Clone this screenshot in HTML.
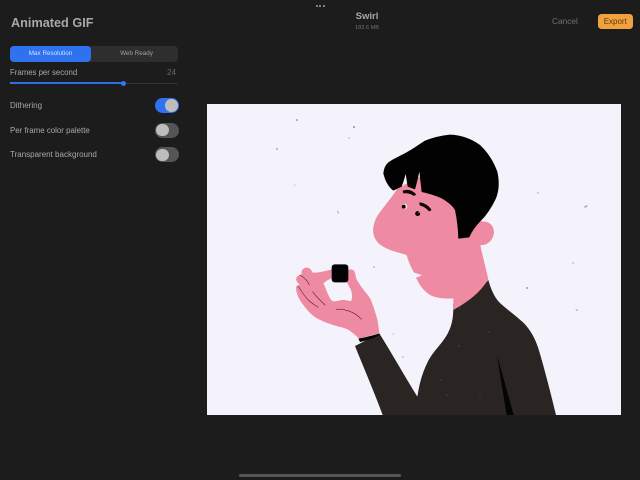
<!DOCTYPE html>
<html>
<head>
<meta charset="utf-8">
<style>
html,body{margin:0;padding:0;background:#1c1c1d;}
body{width:640px;height:480px;position:relative;overflow:hidden;font-family:"Liberation Sans",sans-serif;}
#w{position:absolute;left:0;top:0;width:640px;height:480px;filter:blur(.3px);}
.t{position:absolute;white-space:nowrap;line-height:1;}
.b{position:absolute;}
.tog{position:absolute;left:155px;width:24px;height:15px;border-radius:8px;background:#555556;}
.tog i{position:absolute;top:1.25px;width:12.5px;height:12.5px;border-radius:50%;background:#bdbdbd;}
svg{position:absolute;left:0;top:0;}
</style>
</head>
<body>
<div id="w">
<div class="t" style="left:11px;top:17px;font-size:12.7px;font-weight:bold;color:#a8a8a8;">Animated GIF</div>

<div class="b" style="left:10px;top:46px;width:168px;height:15.5px;border-radius:4px;background:#2e2e2f;"></div>
<div class="b" style="left:10px;top:46px;width:81px;height:15.5px;border-radius:4px;background:#2f72f0;"></div>
<div class="t" style="left:10px;width:81px;text-align:center;top:51px;font-size:6.3px;color:#d6e2fa;">Max Resolution</div>
<div class="t" style="left:93px;width:87px;text-align:center;top:51px;font-size:6.3px;color:#a0a0a0;">Web Ready</div>

<div class="t" style="left:10px;top:68.5px;font-size:7.8px;color:#a8a8a8;">Frames per second</div>
<div class="t" style="left:167px;top:68.5px;font-size:8px;color:#6a6a6a;">24</div>
<div class="b" style="left:10px;top:83px;width:168px;height:1px;background:#333334;"></div>
<div class="b" style="left:10px;top:82.4px;width:113px;height:1.8px;background:#2f6fe6;"></div>
<div class="b" style="left:121px;top:81px;width:5px;height:5px;border-radius:50%;background:#3476ee;"></div>

<div class="t" style="left:10px;top:102px;font-size:8px;color:#a8a8a8;">Dithering</div>
<div class="tog" style="top:98px;background:#2f72f0;"><i style="left:10.25px;"></i></div>
<div class="t" style="left:10px;top:126.5px;font-size:7.9px;color:#a8a8a8;">Per frame color palette</div>
<div class="tog" style="top:122.7px;"><i style="left:1.25px;"></i></div>
<div class="t" style="left:10px;top:151px;font-size:8px;color:#a8a8a8;">Transparent background</div>
<div class="tog" style="top:147.3px;"><i style="left:1.25px;"></i></div>

<div class="b" style="left:315.5px;top:4.5px;width:2px;height:2px;border-radius:50%;background:#a5a5a5;"></div>
<div class="b" style="left:319px;top:4.5px;width:2px;height:2px;border-radius:50%;background:#a5a5a5;"></div>
<div class="b" style="left:322.5px;top:4.5px;width:2px;height:2px;border-radius:50%;background:#a5a5a5;"></div>

<div class="t" style="left:327px;width:80px;text-align:center;top:12px;font-size:9.5px;font-weight:bold;color:#a8a8a8;">Swirl</div>
<div class="t" style="left:327px;width:80px;text-align:center;top:25.5px;font-size:5.6px;color:#707070;">183.6 MB</div>
<div class="t" style="left:552px;top:17px;font-size:8.3px;color:#727272;">Cancel</div>
<div class="b" style="left:597.5px;top:13.5px;width:35.5px;height:15px;border-radius:3.5px;background:#efa23e;"></div>
<div class="t" style="left:597.5px;width:35.5px;text-align:center;top:17.5px;font-size:8px;color:#5e3c10;">Export</div>

<div class="b" style="left:206.5px;top:103.5px;width:414.5px;height:311.5px;background:#f4f3fb;"></div>

<svg width="640" height="480" viewBox="0 0 640 480">
  <!-- body -->
  <g transform="translate(340 270) scale(.33333)">
    <path fill="#2a2522" d="M340,100 C380,85 420,60 445,30 C452,55 462,80 478,97 C500,118 525,135 550,158 C572,180 585,205 595,235 C612,290 632,370 648,435 L128,435 C100,360 70,290 45,228 C70,215 95,203 118,190 C155,250 195,320 232,380 C238,340 248,305 265,272 C285,235 315,215 330,175 C340,150 340,125 340,100 Z"/>
    <path fill="#050505" d="M472,258 L521,435 L500,435 C490,375 480,315 472,258 Z"/>
  </g>

  <!-- face -->
  <g transform="translate(340 120) scale(.33333)">
    <path fill="#ef8aa3" d="M172,205 C155,235 125,265 108,295 C95,325 95,350 118,372 C140,390 170,396 200,405 C205,425 215,445 222,458 L246,465 C240,469 234,471 228,473 C238,495 250,512 270,525 C290,535 315,537 340,535 L340,570 C375,550 415,525 445,478 C438,445 428,410 421,375 C440,378 458,362 462,340 C463,318 448,302 425,305 L400,200 L240,170 Z"/>
  </g>

  <!-- hair, brows, eyes -->
  <g transform="translate(370 130) scale(.33333)">
    <path fill="#020202" d="M40,130 Q42,108 55,97 Q68,88 85,80 Q105,70 125,58 L165,32 Q200,18 240,14 Q290,16 330,45 Q365,78 382,125 Q392,170 378,205 Q358,248 330,275 Q308,298 298,322 L265,326 Q264,285 255,240 Q245,222 215,205 Q185,192 155,186 L148,125 Q142,155 135,178 L113,170 L107,132 Q102,152 95,170 L70,182 Q48,165 40,130 Z"/>
    <path fill="#0a0506" d="M98,182 Q120,174 138,192 Q136,198 130,197 Q118,188 100,190 Z"/>
    <path fill="#0a0506" d="M148,217 Q168,218 184,238 Q182,245 176,243 Q165,230 149,226 Z"/>
    <ellipse cx="103" cy="229" rx="9" ry="8" fill="#f6e4e8"/>
    <circle cx="101" cy="230" r="6" fill="#0a0506"/>
    <circle cx="143" cy="251" r="7.5" fill="#0a0506"/>
    <circle cx="147" cy="247" r="1.6" fill="#f6e4e8"/>
  </g>

  <!-- hand -->
  <g transform="translate(280 250) scale(.33333)">
    <path fill="#ef8aa3" d="M238,266 C222,252 210,240 195,235 C170,228 145,222 125,212 C100,202 85,185 70,165 C58,150 48,130 48,112 C50,105 55,104 60,104 C50,98 46,88 50,82 C54,76 60,74 65,74 C62,62 70,52 82,53 C90,55 94,60 98,68 C120,68 140,62 155,58 L155,84 C145,90 135,95 130,100 C135,108 140,125 148,141 C152,150 158,155 165,154 C175,152 186,150 190,150 C200,150 208,154 213,153 C218,145 217,130 212,118 C207,108 202,100 200,96 L205,60 C215,55 222,60 225,68 C228,85 230,90 235,96 C245,115 260,130 270,144 C280,165 286,190 291,204 C295,222 296,235 298,249 C280,255 258,260 238,266 Z"/>
    <rect x="155" y="43" width="50" height="54" rx="9" fill="#030303"/>
    <g fill="none" stroke="#5a2032" stroke-linecap="round" stroke-width="1.8">
      <path d="M60,75 C72,82 82,90 88,105"/>
      <path d="M98,125 C108,140 125,155 135,165"/>
      <path d="M55,110 C65,122 72,138 85,150 C95,160 105,165 115,172"/>
      <path d="M168,178 C190,175 225,185 244,208"/>
    </g>
    <path fill="#060606" d="M235,266 C255,262 280,256 298,250 L297,256 C280,265 258,272 240,276 Z"/>
  </g>

  <!-- specks -->
  <g fill="#6f6f75">
    <circle cx="297" cy="120" r=".8"/>
    <circle cx="354" cy="127" r=".9"/>
    <circle cx="349" cy="138" r=".7" opacity=".6"/>
    <circle cx="277" cy="149" r=".9" opacity=".7"/>
    <circle cx="295" cy="185" r=".6" opacity=".5"/>
    <path d="M337,210 L339,213 L338,213.5 Z" opacity=".8"/>
    <circle cx="374" cy="267" r=".8" opacity=".6"/>
    <circle cx="538" cy="193" r=".7" opacity=".6"/>
    <path d="M584,207 L587,205 L587.5,206 L585,207.8 Z" opacity=".8"/>
    <circle cx="573" cy="263" r=".7" opacity=".7"/>
    <circle cx="527" cy="288" r=".9" opacity=".9"/>
    <path d="M575,309 L578,310 L577.5,311 Z" opacity=".8"/>
    <circle cx="403" cy="357" r=".7" opacity=".6"/>
    <circle cx="393" cy="334" r=".6" opacity=".5"/>
    <circle cx="460" cy="309" r=".6" fill="#5a5050"/>
    <circle cx="489" cy="332" r=".6" fill="#5a5050"/>
    <circle cx="459" cy="346" r=".7" fill="#5a5050"/>
    <circle cx="441" cy="380" r=".6" fill="#5a5050"/>
    <circle cx="480" cy="395" r=".6" fill="#5a5050"/>
    <circle cx="447" cy="395" r=".6" fill="#5a5050"/>
  </g>
</svg>

<div class="b" style="left:239px;top:474px;width:162px;height:2.5px;border-radius:2px;background:#565657;"></div>
</div>
</body>
</html>
